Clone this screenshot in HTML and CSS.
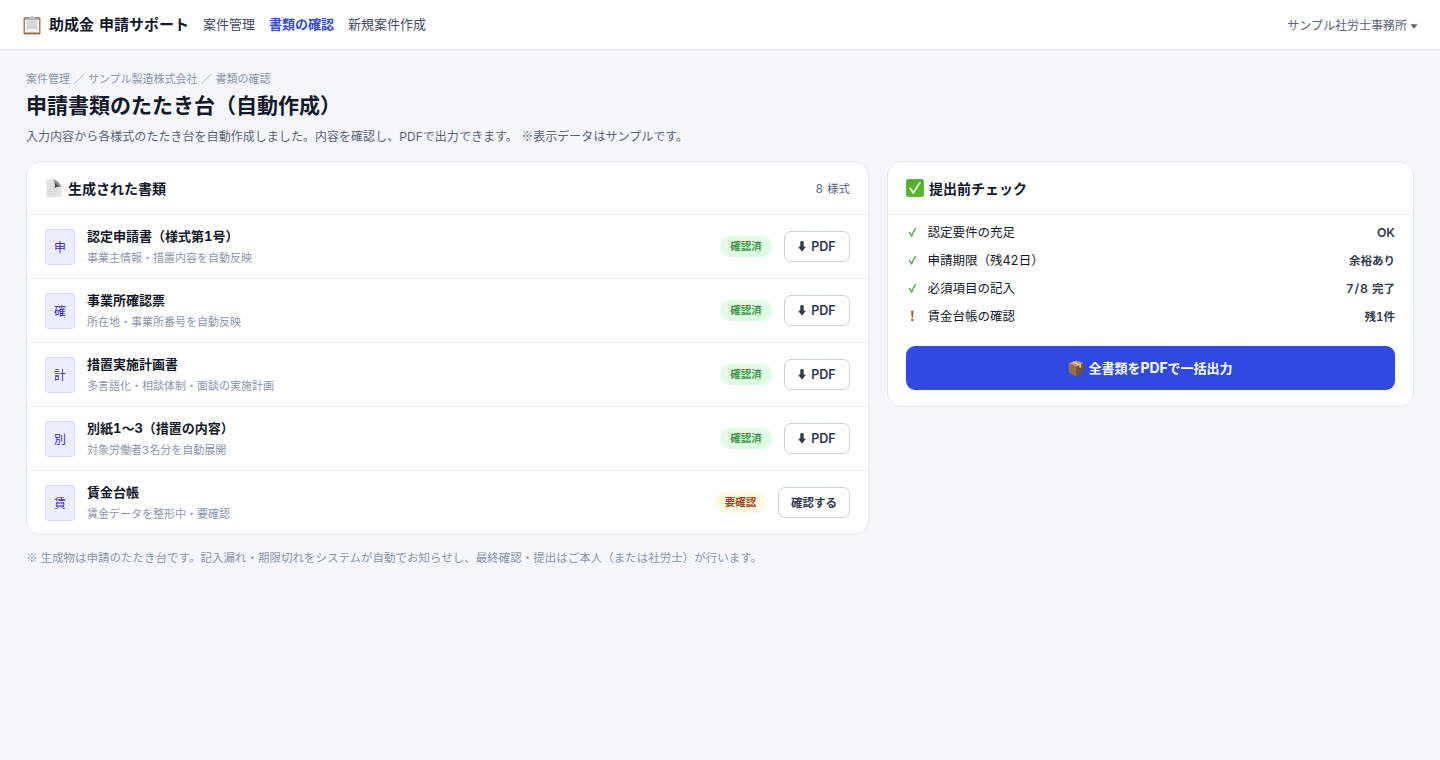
FILE: index.html
```html
<!DOCTYPE html>
<html lang="ja">
<head>
<meta charset="utf-8">
<title>助成金 申請サポート</title>
<link rel="stylesheet" href="styles.css">
</head>
<body>
<header class="topbar">
  <div class="brand">
    <svg class="brand-icon" width="18" height="20" viewBox="0 0 18 20">
      <rect x="0.5" y="2" width="17" height="17.2" rx="1.4" fill="#a9874f"/>
      <rect x="0.5" y="17.8" width="17" height="1.4" rx="0.7" fill="#8e6d3c"/>
      <rect x="2" y="3.2" width="14" height="14.3" fill="#f1f1ef"/>
      <rect x="4" y="5.500" width="10" height="8.500" fill="#d4d5d6"/>
      <path d="M2 3h14v1.800H2z" fill="#a3a9b0"/>
      <path d="M5.500 3.200c.3-1 1.400-1.100 2-1.300.3-.8.800-1.100 1.500-1.100s1.200.3 1.500 1.100c.6.200 1.700.3 2 1.300z" fill="#c3cad2"/>
    </svg>
    <span class="brand-name">助成金 申請サポート</span>
  </div>
  <nav class="nav">
    <a class="nav-link">案件管理</a>
    <a class="nav-link active">書類の確認</a>
    <a class="nav-link">新規案件作成</a>
  </nav>
  <div class="account">サンプル社労士事務所<svg width="8" height="5" viewBox="0 0 8 5"><path d="M.5.300h7L4.600 4q-.6.600-1.200 0z" fill="#56627a"/></svg></div>
</header>

<main class="page">
  <div class="crumbs">案件管理 ／ サンプル製造株式会社 ／ 書類の確認</div>
  <h1 class="title">申請書類のたたき台（自動作成）</h1>
  <p class="lead">入力内容から各様式のたたき台を自動作成しました。内容を確認し、PDFで出力できます。 <span class="jp">※</span>表示データはサンプルです。</p>

  <div class="columns">
    <section class="card">
      <div class="card-head">
        <svg class="head-icon" width="18" height="18" viewBox="0 0 18 18">
          <path d="M1.500.300h7l8 7.500V18h-15z" fill="#e3e3e3"/>
          <path d="M3.500 5h4M3.500 7.500h5M3.500 10h9M3.500 12.500h9M3.500 15h9" stroke="#d3d4d5" stroke-width="1"/>
          <path d="M7.500.300c2.300 1.500 2.700 4.500 2.300 8.600 2-1.400 4.400-1.700 6.700-.9C15.500 4.500 11.500.800 7.500.300z" fill="#8d8d8d"/>
          <path d="M9.800 8.900c.4-2.400.300-4.500-.2-6 1.500 2.800 3.700 4.300 6.900 5.100-2.300-.8-4.700-.5-6.700.9z" fill="#444"/>
        </svg>
        <h2 class="card-title">生成された書類</h2>
        <span class="count">8 様式</span>
      </div>
      <div class="doc">
        <div class="doc-icon">申</div>
        <div class="doc-text"><div class="doc-name">認定申請書（様式第1号）</div><div class="doc-note">事業主情報・措置内容を自動反映</div></div>
        <span class="pill ok">確認済</span>
        <button class="btn"><svg class="arrow" width="8" height="11" viewBox="0 0 8 11"><path d="M2.300.300h3.400v5.500H8L4 10.500 0 5.800h2.300z"/></svg>PDF</button>
      </div>
      <div class="doc">
        <div class="doc-icon">確</div>
        <div class="doc-text"><div class="doc-name">事業所確認票</div><div class="doc-note">所在地・事業所番号を自動反映</div></div>
        <span class="pill ok">確認済</span>
        <button class="btn"><svg class="arrow" width="8" height="11" viewBox="0 0 8 11"><path d="M2.300.300h3.400v5.500H8L4 10.500 0 5.800h2.300z"/></svg>PDF</button>
      </div>
      <div class="doc">
        <div class="doc-icon">計</div>
        <div class="doc-text"><div class="doc-name">措置実施計画書</div><div class="doc-note">多言語化・相談体制・面談の実施計画</div></div>
        <span class="pill ok">確認済</span>
        <button class="btn"><svg class="arrow" width="8" height="11" viewBox="0 0 8 11"><path d="M2.300.300h3.400v5.500H8L4 10.500 0 5.800h2.300z"/></svg>PDF</button>
      </div>
      <div class="doc">
        <div class="doc-icon">別</div>
        <div class="doc-text"><div class="doc-name">別紙1〜3（措置の内容）</div><div class="doc-note">対象労働者3名分を自動展開</div></div>
        <span class="pill ok">確認済</span>
        <button class="btn"><svg class="arrow" width="8" height="11" viewBox="0 0 8 11"><path d="M2.300.300h3.400v5.500H8L4 10.500 0 5.800h2.300z"/></svg>PDF</button>
      </div>
      <div class="doc">
        <div class="doc-icon">賃</div>
        <div class="doc-text"><div class="doc-name">賃金台帳</div><div class="doc-note">賃金データを整形中・要確認</div></div>
        <span class="pill warn">要確認</span>
        <button class="btn wide">確認する</button>
      </div>
    </section>

    <section class="card">
      <div class="card-head">
        <svg class="head-icon" width="18" height="18" viewBox="0 0 18 18">
          <defs><linearGradient id="green" x1="0" y1="0" x2="0" y2="1"><stop offset="0" stop-color="#4fae2f"/><stop offset="1" stop-color="#52bd20"/></linearGradient></defs>
          <rect x="0.300" y="0.300" width="17.400" height="17.400" rx="2.600" fill="url(#green)" stroke="#459c2b" stroke-width=".6"/>
          <path d="M4.100 9.300l3.300 4.600L13.800 3.800" fill="none" stroke="#fff" stroke-width="1.700" stroke-linecap="round" stroke-linejoin="round"/>
        </svg>
        <h2 class="card-title">提出前チェック</h2>
      </div>
      <div class="checks">
        <div class="check-row"><svg class="mark" width="14" height="12" viewBox="0 0 14 12"><path d="M3.200 6.200l2.500 3.600Q7 5 10 2.200" fill="none" stroke="#3d9a37" stroke-width="1.200"/></svg><span class="check-label">認定要件の充足</span><span class="check-value"><span class="latin">OK</span></span></div>
        <div class="check-row"><svg class="mark" width="14" height="12" viewBox="0 0 14 12"><path d="M3.200 6.200l2.500 3.600Q7 5 10 2.200" fill="none" stroke="#3d9a37" stroke-width="1.200"/></svg><span class="check-label">申請期限（残42日）</span><span class="check-value">余裕あり</span></div>
        <div class="check-row"><svg class="mark" width="14" height="12" viewBox="0 0 14 12"><path d="M3.200 6.200l2.500 3.600Q7 5 10 2.200" fill="none" stroke="#3d9a37" stroke-width="1.200"/></svg><span class="check-label">必須項目の記入</span><span class="check-value"><span class="latin spaced">7/8</span> 完了</span></div>
        <div class="check-row"><svg class="mark" width="14" height="12" viewBox="0 0 14 12"><path d="M5.100.800h2.400L6.900 7.700H5.700z" fill="#b0501b"/><circle cx="6.300" cy="10" r="1.200" fill="#b0501b"/></svg><span class="check-label">賃金台帳の確認</span><span class="check-value">残1件</span></div>
      </div>
      <button class="export">
        <svg width="16" height="17" viewBox="0 0 16 17">
          <path d="M.5 3.500L8.200.5l7.300 2.700L8.500 7z" fill="#c49a6c"/>
          <path d="M.5 3.500l8 3.500v9.500L1 12.800z" fill="#9a6d42"/>
          <path d="M15.500 3.200L8.500 7v9.500l6.500-4z" fill="#76502f"/>
          <path d="M3.800 2.200l7.700 3.200v2.800l1.700-1V4.500L5.600 1.500z" fill="#e3c9a0"/>
        </svg>
        <span class="export-label">全書類を<span class="latin">PDF</span>で一括出力</span>
      </button>
    </section>
  </div>
  <p class="footnote"><span class="jp">※</span> 生成物は申請のたたき台です。記入漏れ・期限切れをシステムが自動でお知らせし、最終確認・提出はご本人（または社労士）が行います。</p>
</main>
</body>
</html>
```
FILE: styles.css
```css
* { box-sizing: border-box; }
body {
  margin: 0;
  min-height: 760px;
  background: #f4f6fa;
  color: #13182a;
  font-family: Inter, "Noto Sans CJK JP", sans-serif;
  font-variant-numeric: tabular-nums;
  font-size: 13px;
  line-height: 20px;
  white-space: nowrap;
}
h1, h2, p { margin: 0; }
svg { display: block; flex: none; }
button { font-family: inherit; margin: 0; }
.jp { font-family: "Noto Sans CJK JP", sans-serif; line-height: 1; }

.topbar {
  display: flex;
  align-items: center;
  height: 50px;
  padding: 0 22px 0 23px;
  background: #fff;
  border-bottom: 1px solid #e1e5ed;
}
.brand { display: flex; align-items: center; gap: 8px; width: 180px; }
.brand-icon { margin-top: 1px; }
.brand-name { font-size: 15px; font-weight: 700; word-spacing: 1px; }
.nav { display: flex; gap: 14px; flex: 1; padding-bottom: 2px; }
.nav-link { color: #3f4a5e; }
.nav-link.active { color: #3049e2; font-weight: 700; }
.account {
  display: flex;
  align-items: center;
  gap: 3px;
  padding-top: 2px;
  color: #56627a;
  font-size: 12px;
}
.account svg { margin-top: 1px; }

.page { padding: 19px 26px 0; }
.crumbs { color: #8a95ab; font-size: 11px; line-height: 20px; word-spacing: 0.5px; }
.title { margin-top: 1px; font-size: 21px; font-weight: 700; line-height: 32px; }
.lead { color: #56627a; font-size: 12px; line-height: 20px; margin: 5px 0 14px; letter-spacing: 0.04px; }

.columns {
  display: grid;
  grid-template-columns: 843px 527px;
  gap: 18px;
  align-items: start;
}
.card {
  background: #fff;
  border: 1px solid #e1e5ed;
  border-radius: 14px;
}
.card-head {
  display: flex;
  align-items: center;
  height: 53px;
  padding: 0 18px;
  border-bottom: 1px solid #e9ecf2;
}
.head-icon { margin-right: 5px; }
.card-title { padding-top: 2px; font-size: 14px; font-weight: 700; line-height: 20px; }
.count { margin-left: auto; padding-top: 2px; color: #56627a; font-size: 11.5px; word-spacing: 1px; }

.doc {
  display: flex;
  align-items: center;
  height: 64px;
  padding: 0 18px;
  gap: 12px;
  border-bottom: 1px solid #edf0f5;
}
.doc:last-child { height: 63px; border-bottom: 0; }
.doc-icon {
  width: 30px;
  height: 36px;
  border: 1px solid #d5daf5;
  border-radius: 4px;
  background: #ebeeff;
  color: #4324c4;
  font-size: 12px;
  line-height: 36px;
  text-align: center;
}
.doc-text { flex: 1; }
.doc-name { font-weight: 700; line-height: 20px; padding-bottom: 2px; }
.doc-note { color: #8a95ab; font-size: 11px; line-height: 20px; }
.pill {
  width: 52px;
  height: 21px;
  border-radius: 11px;
  font-size: 10.5px;
  font-weight: 700;
  line-height: 21px;
  text-align: center;
}
.pill.ok { background: #dffde5; color: #3e9540; }
.pill.warn { width: 51px; background: #fef9e3; color: #9a4513; }
.btn {
  display: flex;
  align-items: center;
  justify-content: center;
  gap: 5px;
  width: 66px;
  height: 31px;
  padding: 0;
  background: #fff;
  border: 1px solid #c8d1df;
  border-radius: 7px;
  color: #303a4e;
  font-size: 12.5px;
  font-weight: 600;
}
.btn.wide { width: 72px; padding-bottom: 2px; font-size: 11.5px; }
.arrow { fill: #303a4e; }

.checks { padding: 3px 18px 0; }
.check-row { display: flex; align-items: center; height: 28px; font-size: 12.5px; }
.mark { margin-right: 7.5px; }
.check-label { flex: 1; padding-top: 2px; }
.check-value { padding-top: 2px; color: #303a4e; font-size: 11.5px; font-weight: 600; }
.latin { font-size: 1.07em; line-height: 1; }
.spaced { letter-spacing: 0.9px; }
.export {
  display: flex;
  align-items: center;
  justify-content: center;
  gap: 4px;
  width: 489px;
  height: 44px;
  margin: 16px 18px;
  padding: 0;
  border: 0;
  border-radius: 9px;
  background: #3049e2;
  color: #fff;
  font-size: 13px;
  font-weight: 700;
}
.export-label { padding-bottom: 2px; }
.footnote { margin-top: 13px; color: #8a95ab; font-size: 11.5px; line-height: 20px; }
```
